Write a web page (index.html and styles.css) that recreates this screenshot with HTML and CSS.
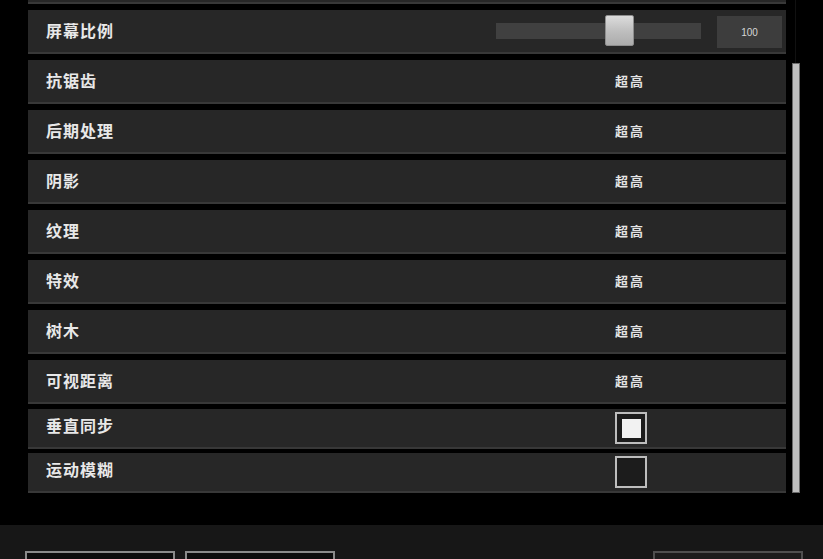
FILE: index.html
```html
<!DOCTYPE html>
<html lang="zh-CN">
<head>
<meta charset="utf-8">
<title>画面设置</title>
<link rel="stylesheet" href="styles.css">
</head>
<body>
<div class="screen">
  <main class="settings">
    <div class="viewport">
      <div class="list">
        <div class="row"></div>
        <div class="row">
          <span class="label">屏幕比例</span>
          <div class="ctrl slider-ctrl">
            <div class="track"><div class="thumb"></div></div>
            <div class="numbox">100</div>
          </div>
        </div>
        <div class="row"><span class="label">抗锯齿</span><div class="ctrl"><span class="val">超高</span></div></div>
        <div class="row"><span class="label">后期处理</span><div class="ctrl"><span class="val">超高</span></div></div>
        <div class="row"><span class="label">阴影</span><div class="ctrl"><span class="val">超高</span></div></div>
        <div class="row"><span class="label">纹理</span><div class="ctrl"><span class="val">超高</span></div></div>
        <div class="row"><span class="label">特效</span><div class="ctrl"><span class="val">超高</span></div></div>
        <div class="row"><span class="label">树木</span><div class="ctrl"><span class="val">超高</span></div></div>
        <div class="row"><span class="label">可视距离</span><div class="ctrl"><span class="val">超高</span></div></div>
        <div class="row check"><span class="label">垂直同步</span><div class="ctrl"><span class="box on"></span></div></div>
        <div class="row check"><span class="label">运动模糊</span><div class="ctrl"><span class="box"></span></div></div>
      </div>
    </div>
    <div class="scrollbar"><div class="sb-thumb"></div></div>
  </main>
  <footer class="bottombar">
    <button class="btn btn-a"></button>
    <button class="btn btn-a"></button>
    <span class="spacer"></span>
    <button class="btn btn-b"></button>
  </footer>
</div>
</body>
</html>
```

FILE: styles.css
```css
* { box-sizing: border-box; }
html, body {
  margin: 0;
  padding: 0;
  background: #000;
  width: 823px;
  height: 559px;
  overflow: hidden;
  font-family: "Noto Sans CJK SC", "Noto Sans", sans-serif;
}
.screen {
  display: flex;
  flex-direction: column;
  height: 559px;
}
.settings {
  height: 525px;
  display: flex;
  padding-left: 28px;
  overflow: hidden;
}
.viewport {
  width: 758px;
  height: 525px;
  overflow: hidden;
}
.list {
  display: flex;
  flex-direction: column;
  margin-top: -40px;
}
.row {
  height: 44px;
  flex: 0 0 auto;
  margin-bottom: 6px;
  background: #272727;
  border-bottom: 2px solid #383838;
  display: flex;
  align-items: center;
  padding-left: 18px;
  padding-right: 4px;
}
.row.check {
  height: 40px;
  margin-top: -1px;
  margin-bottom: 5px;
}
.label {
  flex: 1;
  color: #e8e8e8;
  font-size: 16px;
  font-weight: 700;
  letter-spacing: 1px;
  line-height: 1;
  padding-bottom: 3px;
}
.check .label {
  padding-bottom: 6px;
}
.ctrl {
  width: 302px;
  height: 100%;
  display: flex;
  align-items: center;
  justify-content: center;
}
.val {
  color: #e4e4e4;
  font-size: 13px;
  font-weight: 700;
  letter-spacing: 2px;
  margin-right: 2px;
  line-height: 1;
  padding-bottom: 1px;
}
.slider-ctrl {
  justify-content: flex-start;
  padding-left: 16px;
  gap: 16px;
}
.track {
  position: relative;
  width: 205px;
  height: 16px;
  background: #404040;
}
.thumb {
  position: absolute;
  left: 109px;
  top: -8px;
  width: 29px;
  height: 31px;
  border-radius: 2px;
  background: linear-gradient(#dcdcdc, #bdbdbd 55%, #acacac);
  border: 1px solid #8e8e8e;
}
.numbox {
  width: 65px;
  height: 32px;
  margin-top: 2px;
  background: #3d3d3d;
  color: #d6d6d6;
  font-family: "Liberation Sans", sans-serif;
  font-size: 10px;
  display: flex;
  align-items: center;
  justify-content: center;
}
.box {
  width: 32px;
  height: 32px;
  border: 2px solid #bdbdbd;
  background: #1c1c1c;
  display: flex;
  align-items: center;
  justify-content: center;
}
.box.on::after {
  content: "";
  width: 19px;
  height: 19px;
  background: #f2f2f2;
}
.scrollbar {
  position: relative;
  width: 8px;
  margin-left: 6px;
  height: 525px;
}
.scrollbar::before {
  content: "";
  position: absolute;
  left: 3px;
  top: 0;
  width: 1px;
  height: 63px;
  background: #111;
}
.sb-thumb {
  margin-top: 63px;
  width: 8px;
  height: 430px;
  background: #bfbfbf;
  border: 1px solid #6a6a6a;
}
.bottombar {
  height: 34px;
  background: #171717;
  display: flex;
  align-items: flex-start;
  padding: 26px 20px 0 25px;
  gap: 10px;
  overflow: hidden;
}
.btn {
  width: 150px;
  height: 34px;
  flex: 0 0 auto;
  padding: 0;
  font: inherit;
}
.btn-a {
  background: #0c0c0c;
  border: 2px solid #8a8a8a;
}
.btn-b {
  background: #1c1c1c;
  border: 2px solid #4f4f4f;
}
.spacer { flex: 1; }
```
